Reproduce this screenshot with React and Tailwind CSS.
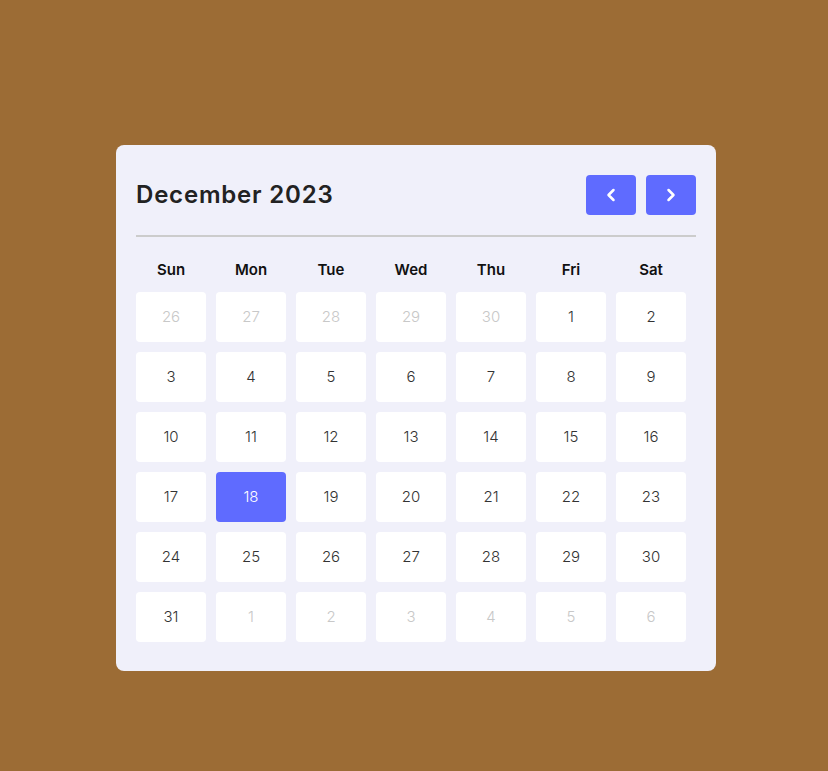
import { ChevronLeft, ChevronRight } from "lucide-react";

const days = ["Sun", "Mon", "Tue", "Wed", "Thu", "Fri", "Sat"];

// 6 weeks grid: prev month tail, December, next month head
const cells = [
  ...[26, 27, 28, 29, 30].map((d) => ({ d, muted: true })),
  ...Array.from({ length: 31 }, (_, i) => ({ d: i + 1, muted: false })),
  ...[1, 2, 3, 4, 5, 6].map((d) => ({ d, muted: true })),
];

export default function App() {
  return (
    <div
      className="min-h-screen bg-[#9c6c35] pt-[145px] pl-[116px]"
      style={{ fontFamily: "Inter, 'Noto Sans', sans-serif" }}
    >
      <div className="w-[600px] rounded-[8px] bg-[#f0f0fa] px-5 pt-5 pb-[29px]">
        {/* Header */}
        <div className="flex h-[60px] items-center justify-between">
          <h1 className="text-[24px] font-semibold tracking-[0.8px] text-[#222222]">
            December 2023
          </h1>
          <div className="flex gap-[10px]">
            <button className="flex h-10 w-[50px] items-center justify-center rounded-[4px] bg-[#5f6bff] text-white">
              <ChevronLeft size={20} strokeWidth={3} />
            </button>
            <button className="flex h-10 w-[50px] items-center justify-center rounded-[4px] bg-[#5f6bff] text-white">
              <ChevronRight size={20} strokeWidth={3} />
            </button>
          </div>
        </div>

        <div className="mt-[10px] h-[2px] bg-[#cccccc]" />

        {/* Weekday names */}
        <div className="mt-[23px] grid grid-cols-[repeat(7,70px)] gap-x-[10px]">
          {days.map((d) => (
            <div
              key={d}
              className="flex h-5 items-center justify-center text-[15px] font-semibold text-[#111111]"
            >
              {d}
            </div>
          ))}
        </div>

        {/* Dates */}
        <div className="mt-[12px] grid grid-cols-[repeat(7,70px)] gap-[10px]">
          {cells.map((c, i) => {
            const active = !c.muted && c.d === 18;
            return (
              <div
                key={i}
                className={
                  "flex h-[50px] items-center justify-center rounded-[4px] text-[15px] font-light " +
                  (active
                    ? "bg-[#5f6bff] text-white"
                    : c.muted
                    ? "bg-white text-[#c8c8c8]"
                    : "bg-white text-[#333333]")
                }
              >
                {c.d}
              </div>
            );
          })}
        </div>
      </div>
    </div>
  );
}
